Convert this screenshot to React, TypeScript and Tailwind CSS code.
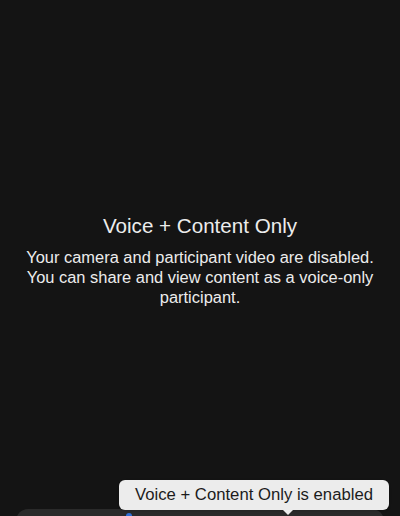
const App = () => {
    return (
        <div className="relative h-[516px] w-full overflow-hidden bg-[#141414] flex flex-col" style={{ fontFamily: '"Liberation Sans", Arial, sans-serif' }}>
            <main className="h-[509px] shrink-0 flex items-center justify-center pt-[10px] px-3 text-center text-[#ececec]">
                <div>
                    <h1 className="text-[20.6px] leading-[28px] mb-[7px]">Voice + Content Only</h1>
                    <p className="text-[16.45px] leading-[20px]">
                        Your camera and participant video are disabled.
                        <br />
                        You can share and view content as a voice-only participant.
                    </p>
                </div>
            </main>
            <div className="mx-4 h-[60px] shrink-0 rounded-xl bg-[#2a2a2a] relative">
                <span className="absolute left-[110px] top-[4px] h-[4px] w-[6px] rounded-t-full bg-[#2f6fd6]" />
            </div>
            <div className="absolute left-[119px] top-[480px] w-[270px] h-[30px] rounded-[6px] bg-[#ececec] flex items-center justify-center text-[16.7px] text-[#1c1c1c] shadow">
                Voice + Content Only is enabled
                <span className="absolute left-[162px] top-[28px] w-0 h-0 border-l-[7px] border-r-[7px] border-t-[7px] border-l-transparent border-r-transparent border-t-[#ececec]" />
            </div>
        </div>
    )
};

export default App;
